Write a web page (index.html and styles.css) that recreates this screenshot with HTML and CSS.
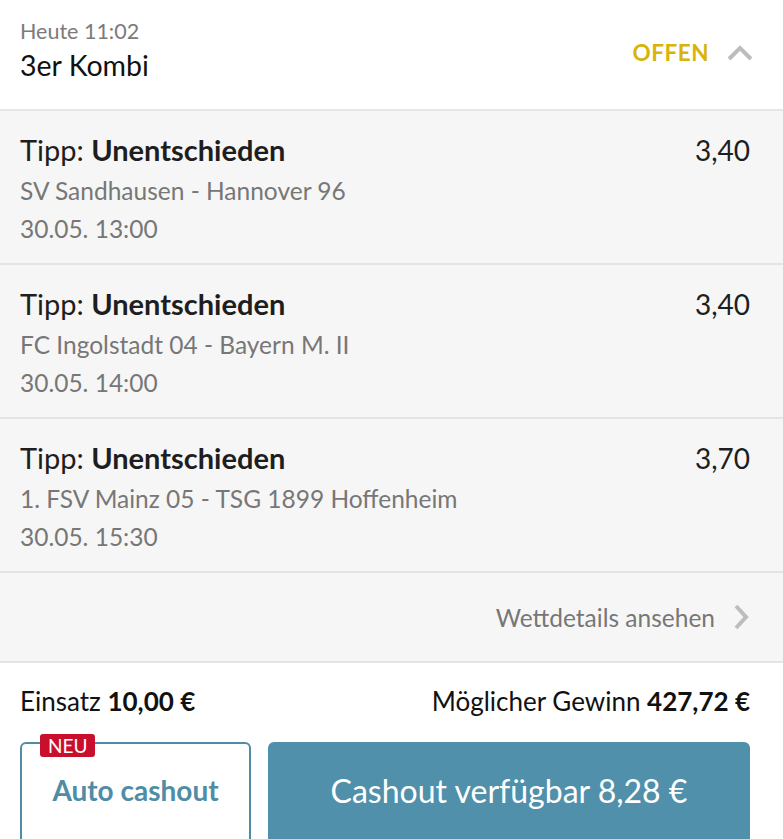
FILE: index.html
```html
<!DOCTYPE html>
<html lang="de">
<head>
<meta charset="utf-8">
<link rel="stylesheet" href="styles.css">
</head>
<body>
<div class="card">
  <header class="head">
    <div class="head-left">
      <div class="time">Heute 11:02</div>
      <div class="title">3er Kombi</div>
    </div>
    <div class="head-right">
      <span class="status">OFFEN</span>
      <svg class="chev-up" width="26" height="16" viewBox="0 0 26 16"><polyline points="2,14 13,3 24,14" fill="none" stroke="#bdbdbd" stroke-width="4"/></svg>
    </div>
  </header>

  <div class="tip">
    <div class="tip-main">
      <div class="tip-line">Tipp: <b>Unentschieden</b></div>
      <div class="match">SV Sandhausen - Hannover 96</div>
      <div class="date">30.05. 13:00</div>
    </div>
    <div class="odds">3,40</div>
  </div>
  <div class="tip">
    <div class="tip-main">
      <div class="tip-line">Tipp: <b>Unentschieden</b></div>
      <div class="match">FC Ingolstadt 04 - Bayern M. II</div>
      <div class="date">30.05. 14:00</div>
    </div>
    <div class="odds">3,40</div>
  </div>
  <div class="tip">
    <div class="tip-main">
      <div class="tip-line">Tipp: <b>Unentschieden</b></div>
      <div class="match">1. FSV Mainz 05 - TSG 1899 Hoffenheim</div>
      <div class="date">30.05. 15:30</div>
    </div>
    <div class="odds">3,70</div>
  </div>

  <div class="details">
    <span>Wettdetails ansehen</span>
    <svg class="chev-right" width="16" height="26" viewBox="0 0 16 26"><polyline points="3,2 13,13 3,24" fill="none" stroke="#bdbdbd" stroke-width="4"/></svg>
  </div>

  <div class="foot">
    <div class="sums">
      <div>Einsatz <b>10,00 €</b></div>
      <div>Möglicher Gewinn <b>427,72 €</b></div>
    </div>
    <div class="actions">
      <button class="btn-auto"><span class="badge">NEU</span>Auto cashout</button>
      <button class="btn-cash">Cashout verfügbar 8,28 €</button>
    </div>
  </div>
</div>
</body>
</html>
```

FILE: styles.css
```css
* { box-sizing: border-box; }
html, body { margin: 0; padding: 0; background: #fff; }
body { font-family: "Lato", "Noto Sans", sans-serif; color: #1a1a1a; width: 783px; height: 839px; overflow: hidden; }

.head { height: 111px; display: flex; align-items: center; justify-content: space-between; padding: 0 30px 0 20px; border-bottom: 2px solid #e6e6e6; background: #fff; }
.head-left { display: flex; flex-direction: column; margin-top: -10px; }
.time { font-size: 21.5px; color: #7b7b7b; line-height: 28px; }
.title { font-size: 28.5px; color: #111; line-height: 36px; margin-top: 2px; }
.head-right { display: flex; align-items: center; gap: 18px; margin-top: -4px; }
.status { font-size: 22.5px; font-weight: 700; color: #d8b40a; letter-spacing: 0.5px; }
.chev-up { display: block; }

.tip { height: 154px; background: #f6f6f6; border-bottom: 2px solid #e4e4e4; display: flex; justify-content: space-between; padding: 19px 33px 0 20px; }
.tip-line { font-size: 29px; color: #1e1e1e; line-height: 40px; }
.tip-line b { font-weight: 700; }
.match, .date { font-size: 24.5px; color: #777; line-height: 38px; }
.match { margin-top: 2px; }
.odds { font-size: 28px; color: #1e1e1e; line-height: 40px; }

.details { height: 90px; background: #f6f6f6; border-bottom: 2px solid #e4e4e4; display: flex; align-items: center; justify-content: flex-end; padding: 0 34px 0 20px; gap: 18px; font-size: 24.5px; color: #777; }
.chev-right { display: block; }

.foot { background: #fff; padding: 19px 33px 0 20px; }
.sums { display: flex; justify-content: space-between; font-size: 26px; color: #111; line-height: 38px; }
.sums b { font-weight: 700; }
.actions { display: flex; gap: 17px; margin-top: 22px; }
.btn-auto { position: relative; width: 231px; height: 110px; background: #fff; border: 2px solid #4f8ca5; border-radius: 6px; color: #4f8ca5; font-family: inherit; font-size: 28px; font-weight: 700; padding: 0 0 14px; }
.badge { position: absolute; left: 18px; top: -10px; background: #c8102e; color: #fff; font-size: 19px; font-weight: 400; line-height: 23px; padding: 0 8px; border-radius: 3px; }
.btn-cash { flex: 1; height: 110px; background: #5190aa; border: none; border-radius: 6px; color: #fff; font-family: inherit; font-size: 32px; font-weight: 400; padding: 0 0 14px; }
```
